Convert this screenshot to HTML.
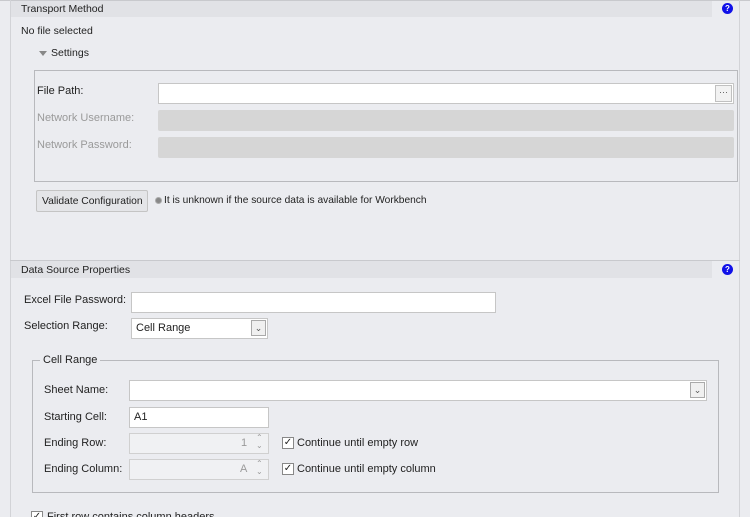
<!DOCTYPE html>
<html><head><style>
*{box-sizing:border-box;margin:0;padding:0}
html,body{width:750px;height:517px;overflow:hidden}
body{background:#ebecf0;font-family:"Liberation Sans",sans-serif;font-size:11px;color:#222;position:relative}
.a{position:absolute}
.t{position:absolute;white-space:nowrap;line-height:13px}
.g{color:#9a9a9a}
.in{position:absolute;background:#fff;border:1px solid #c6c6c6}
.dis{position:absolute;background:#d6d6d6;border-radius:2px}
.help{position:absolute;width:11px;height:11px;border-radius:50%;background:#1010e8;color:#fff;font-size:8px;font-weight:bold;text-align:center;line-height:11px}
.cb{position:absolute;width:12px;height:12px;border:1px solid #888;background:#fff;font-size:10px;line-height:10px;text-align:center;color:#222}
</style></head><body>
<div class="a" style="left:0;top:0;width:750px;height:1px;background:#c8c9cd"></div>
<div class="a" style="left:10px;top:0;width:1px;height:517px;background:#d2d3d7"></div>
<div class="a" style="left:739px;top:0;width:1px;height:517px;background:#d2d3d7"></div>
<div class="a" style="left:11px;top:1px;width:701px;height:16px;background:#e1e2e6"></div>
<div class="t" style="left:21px;top:3px;font-size:10.5px">Transport Method</div>
<div class="help" style="left:722px;top:3px">?</div>
<div class="t" style="left:21px;top:25px;font-size:10.5px">No file selected</div>
<div class="a" style="left:39px;top:51px;width:0;height:0;border-left:4px solid transparent;border-right:4px solid transparent;border-top:5px solid #888"></div>
<div class="t" style="left:51px;top:47px;font-size:10.5px">Settings</div>
<div class="a" style="left:34px;top:70px;width:704px;height:112px;border:1px solid #b8b9bd"></div>
<div class="t" style="left:37px;top:85px">File Path:</div>
<div class="in" style="left:158px;top:83px;width:576px;height:21px"></div>
<div class="a" style="left:715px;top:85px;width:17px;height:17px;border:1px solid #c0c0c0;background:#f2f2f2;font-size:9px;text-align:center;line-height:12px;color:#555">···</div>
<div class="t g" style="left:37px;top:112px">Network Username:</div>
<div class="dis" style="left:158px;top:110px;width:576px;height:21px"></div>
<div class="t g" style="left:37px;top:139px">Network Password:</div>
<div class="dis" style="left:158px;top:137px;width:576px;height:21px"></div>
<div class="a" style="left:36px;top:190px;width:112px;height:22px;border:1px solid #c4c4c4;background:#e4e5e8;border-radius:2px"></div>
<div class="t" style="left:42px;top:195px;font-size:10.3px">Validate Configuration</div>
<div class="a" style="left:155px;top:197px;width:7px;height:7px;border-radius:50%;background:#888;border:1px solid #aaa"></div>
<div class="t" style="left:164px;top:194px;font-size:10.2px">It is unknown if the source data is available for Workbench</div>
<div class="a" style="left:10px;top:260px;width:730px;height:1px;background:#c8c9cd"></div>
<div class="a" style="left:11px;top:261px;width:701px;height:17px;background:#e1e2e6"></div>
<div class="t" style="left:21px;top:264px;font-size:10.5px">Data Source Properties</div>
<div class="help" style="left:722px;top:264px">?</div>
<div class="t" style="left:24px;top:294px;font-size:11px">Excel File Password:</div>
<div class="in" style="left:131px;top:292px;width:365px;height:21px"></div>
<div class="t" style="left:24px;top:320px;font-size:11px">Selection Range:</div>
<div class="in" style="left:131px;top:318px;width:137px;height:21px"></div>
<div class="t" style="left:136px;top:322px;font-size:11px">Cell Range</div>
<div class="a" style="left:251px;top:320px;width:15px;height:16px;border:1px solid #aaa;background:#f0f0f0;font-size:9px;text-align:center;line-height:14px;color:#555">⌄</div>
<div class="a" style="left:32px;top:360px;width:687px;height:133px;border:1px solid #b8b9bd"></div>
<div class="t" style="left:40px;top:354px;background:#ebecf0;padding:0 3px;font-size:11px">Cell Range</div>
<div class="t" style="left:44px;top:384px;font-size:11px">Sheet Name:</div>
<div class="in" style="left:129px;top:380px;width:578px;height:21px"></div>
<div class="a" style="left:690px;top:382px;width:15px;height:16px;border:1px solid #aaa;background:#f0f0f0;font-size:9px;text-align:center;line-height:14px;color:#555">⌄</div>
<div class="t" style="left:44px;top:411px;font-size:11px">Starting Cell:</div>
<div class="in" style="left:129px;top:407px;width:140px;height:21px"></div>
<div class="t" style="left:134px;top:411px;font-size:11px">A1</div>
<div class="t" style="left:44px;top:437px;font-size:11px">Ending Row:</div>
<div class="in" style="left:129px;top:433px;width:140px;height:21px;background:#f0f1f3;border-color:#d0d0d0"></div>
<div class="t g" style="left:241px;top:437px;font-size:11px">1</div>
<div class="t g" style="left:256px;top:434px;font-size:8px;line-height:8px">⌃<br>⌄</div>
<div class="cb" style="left:282px;top:437px">✓</div>
<div class="t" style="left:297px;top:437px;font-size:11px">Continue until empty row</div>
<div class="t" style="left:44px;top:463px;font-size:11px">Ending Column:</div>
<div class="in" style="left:129px;top:459px;width:140px;height:21px;background:#f0f1f3;border-color:#d0d0d0"></div>
<div class="t g" style="left:240px;top:463px;font-size:11px">A</div>
<div class="t g" style="left:256px;top:460px;font-size:8px;line-height:8px">⌃<br>⌄</div>
<div class="cb" style="left:282px;top:463px">✓</div>
<div class="t" style="left:297px;top:463px;font-size:11px">Continue until empty column</div>
<div class="cb" style="left:31px;top:511px">✓</div>
<div class="t" style="left:47px;top:511px;font-size:11px">First row contains column headers</div>
</body></html>
